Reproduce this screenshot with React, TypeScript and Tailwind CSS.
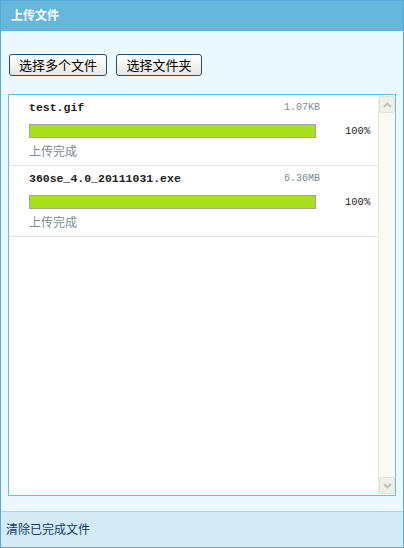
import React from "react";

const files = [
  { name: "test.gif", size: "1.07KB" },
  { name: "360se_4.0_20111031.exe", size: "6.36MB" },
];

function Item({ name, size }: { name: string; size: string }) {
  return (
    <div className="h-[71px] border-b border-[#e3e3e3] pl-[20px] pt-[6px] flex flex-col">
      <div className="flex items-center h-[14px]">
        <div className="flex-1 font-['Liberation_Mono',monospace] font-bold text-[11.5px] text-[#222] leading-[14px]">
          {name}
        </div>
        <div className="mr-[58px] font-['Liberation_Mono',monospace] text-[10px] text-[#7a8a96] leading-[14px]">
          {size}
        </div>
      </div>
      <div className="flex items-center mt-[9px] h-[14px]">
        <div className="w-[287px] h-[14px] border border-[#a3a3a3] bg-[#a8e01b]" />
        <div className="ml-[29px] font-['Liberation_Mono',monospace] text-[10.5px] text-[#222] leading-[14px]">
          100%
        </div>
      </div>
      <div className="mt-[7px] text-[12px] leading-[14px] text-[#7a8c9a]">上传完成</div>
    </div>
  );
}

export default function App() {
  return (
    <div className="w-[404px] h-[548px] border border-[#59a9d7] bg-[#ebf8fe] flex flex-col font-['Liberation_Sans','Noto_Sans_CJK_SC',sans-serif]">
      <div className="h-[30px] bg-[#67b7dc] flex items-center pl-[10px] text-white font-bold text-[12px] shrink-0">
        上传文件
      </div>
      <div className="flex pl-[8px] pt-[23px] gap-[9px] shrink-0">
        <button className="h-[22px] w-[98px] rounded-[3px] border border-[#1d4f7f] bg-gradient-to-b from-white to-[#e9e7dc] text-[13px] text-black leading-none">
          选择多个文件
        </button>
        <button className="h-[22px] w-[86px] rounded-[3px] border border-[#1d4f7f] bg-gradient-to-b from-white to-[#e9e7dc] text-[13px] text-black leading-none">
          选择文件夹
        </button>
      </div>
      <div className="mt-[18px] mx-[7px] h-[402px] border border-[#6abde6] bg-white flex shrink-0">
        <div className="flex-1 flex flex-col">
          {files.map((f) => (
            <Item key={f.name} name={f.name} size={f.size} />
          ))}
        </div>
        <div className="w-[17px] bg-[#fbfbf4] border-l border-[#ecece4] flex flex-col justify-between py-[1px]">
          <div className="h-[17px] w-[16px] rounded-[2px] border border-[#e4e3d8] bg-[#f1f0e7] flex items-center justify-center">
            <svg width="9" height="6" viewBox="0 0 9 6">
              <path d="M1 5 L4.5 1.5 L8 5" stroke="#c4c3b8" strokeWidth="2" fill="none" />
            </svg>
          </div>
          <div className="h-[17px] w-[16px] rounded-[2px] border border-[#e4e3d8] bg-[#f1f0e7] flex items-center justify-center">
            <svg width="9" height="6" viewBox="0 0 9 6">
              <path d="M1 1 L4.5 4.5 L8 1" stroke="#c4c3b8" strokeWidth="2" fill="none" />
            </svg>
          </div>
        </div>
      </div>
      <div className="flex-1" />
      <div className="h-[36px] bg-[#d4ebf7] border-t border-[#a9d6ec] flex items-center pl-[5px] text-[12px] text-[#0d3b6b] shrink-0">
        清除已完成文件
      </div>
    </div>
  );
}
